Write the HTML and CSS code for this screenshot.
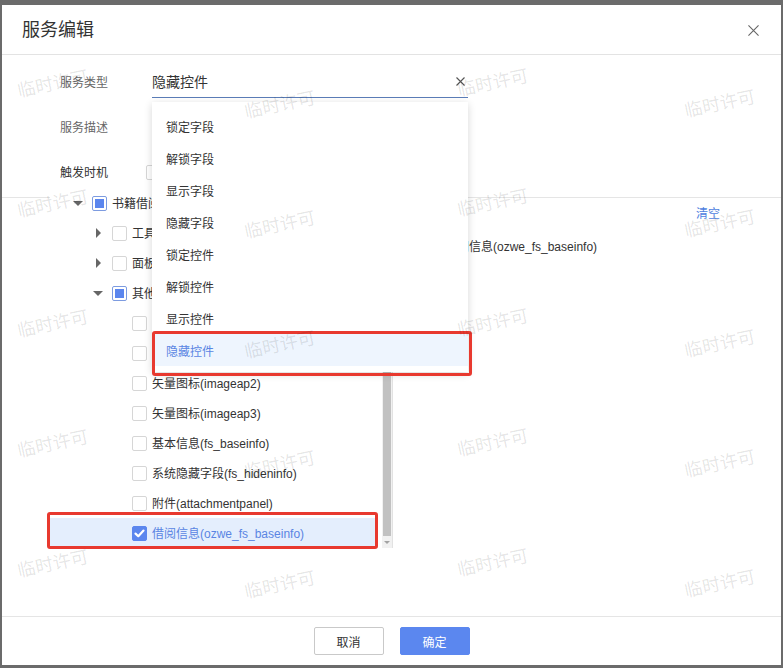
FILE: index.html
```html
<!DOCTYPE html>
<html lang="zh-CN">
<head>
<meta charset="utf-8">
<title>服务编辑</title>
<link rel="stylesheet" href="styles.css">
</head>
<body>
<div class="dialog">
  <div class="dlg-header">
    <span class="title">服务编辑</span>
    <svg class="close" viewBox="0 0 12 12"><path d="M0.5 0.5L11.5 11.5M11.5 0.5L0.5 11.5" stroke="#666" stroke-width="1.2" fill="none"/></svg>
  </div>
  <div class="dlg-body">
    <div class="form">
      <div class="form-row">
        <span class="lbl muted">服务类型</span>
        <div class="select">
          <span class="select-value">隐藏控件</span>
          <svg class="clear" viewBox="0 0 9 9"><path d="M0.5 0.5L8.5 8.5M8.5 0.5L0.5 8.5" stroke="#555" stroke-width="1.1" fill="none"/></svg>
          <ul class="dropdown">
            <li>锁定字段</li>
            <li>解锁字段</li>
            <li>显示字段</li>
            <li>隐藏字段</li>
            <li>锁定控件</li>
            <li>解锁控件</li>
            <li>显示控件</li>
            <li class="active">隐藏控件</li>
          </ul>
        </div>
      </div>
      <div class="form-row">
        <span class="lbl muted">服务描述</span>
      </div>
      <div class="form-row">
        <span class="lbl">触发时机</span>
        <span class="cb trigger-cb"></span>
      </div>
    </div>
    <div class="transfer">
      <div class="tree-panel">
        <div class="tree-rows">
          <div class="row"><span class="caret down"></span><span class="cb half"></span><span class="txt">书籍借阅信息</span></div>
          <div class="row l1"><span class="caret right"></span><span class="cb"></span><span class="txt">工具栏</span></div>
          <div class="row l1"><span class="caret right"></span><span class="cb"></span><span class="txt">面板</span></div>
          <div class="row l1"><span class="caret down"></span><span class="cb half"></span><span class="txt">其他</span></div>
          <div class="row l2"><span class="caret"></span><span class="cb"></span><span class="txt">矢量图标(imageap)</span></div>
          <div class="row l2"><span class="caret"></span><span class="cb"></span><span class="txt">矢量图标(imageap1)</span></div>
          <div class="row l2"><span class="caret"></span><span class="cb"></span><span class="txt">矢量图标(imageap2)</span></div>
          <div class="row l2"><span class="caret"></span><span class="cb"></span><span class="txt">矢量图标(imageap3)</span></div>
          <div class="row l2"><span class="caret"></span><span class="cb"></span><span class="txt">基本信息(fs_baseinfo)</span></div>
          <div class="row l2"><span class="caret"></span><span class="cb"></span><span class="txt">系统隐藏字段(fs_hideninfo)</span></div>
          <div class="row l2"><span class="caret"></span><span class="cb"></span><span class="txt">附件(attachmentpanel)</span></div>
          <div class="row l2 sel"><span class="caret"></span><span class="cb on"><svg viewBox="0 0 15 15" class="tick"><path d="M3.5 7.6L6.3 10.2L11.5 4.6" stroke="#fff" stroke-width="2.2" fill="none" stroke-linecap="round" stroke-linejoin="round"/></svg></span><span class="txt">借阅信息(ozwe_fs_baseinfo)</span></div>
        </div>
        <div class="scroll">
          <div class="scroll-gap"></div>
          <div class="thumb"></div>
          <div class="scroll-arrow"></div>
        </div>
      </div>
      <div class="selected">
        <div class="sel-head"><a class="link">清空</a></div>
        <div class="sel-item">借阅信息(ozwe_fs_baseinfo)</div>
      </div>
    </div>
  </div>
  <div class="dlg-footer">
    <button class="btn btn-default">取消</button>
    <button class="btn btn-primary">确定</button>
  </div>

  <div class="annot annot-1"></div>
  <div class="annot annot-2"></div>

  <div class="watermarks">
    <span class="wm" style="left:15px;top:69px">临时许可</span>
    <span class="wm" style="left:242px;top:90px">临时许可</span>
    <span class="wm" style="left:455px;top:68px">临时许可</span>
    <span class="wm" style="left:682px;top:89px">临时许可</span>
    <span class="wm" style="left:15px;top:189px">临时许可</span>
    <span class="wm" style="left:242px;top:210px">临时许可</span>
    <span class="wm" style="left:455px;top:188px">临时许可</span>
    <span class="wm" style="left:682px;top:209px">临时许可</span>
    <span class="wm" style="left:15px;top:309px">临时许可</span>
    <span class="wm" style="left:242px;top:330px">临时许可</span>
    <span class="wm" style="left:455px;top:308px">临时许可</span>
    <span class="wm" style="left:682px;top:329px">临时许可</span>
    <span class="wm" style="left:15px;top:429px">临时许可</span>
    <span class="wm" style="left:242px;top:450px">临时许可</span>
    <span class="wm" style="left:455px;top:428px">临时许可</span>
    <span class="wm" style="left:682px;top:449px">临时许可</span>
    <span class="wm" style="left:15px;top:549px">临时许可</span>
    <span class="wm" style="left:242px;top:570px">临时许可</span>
    <span class="wm" style="left:455px;top:548px">临时许可</span>
    <span class="wm" style="left:682px;top:569px">临时许可</span>
  </div>
</div>
</body>
</html>
```

FILE: styles.css
```css
* { box-sizing: border-box; }
html, body { margin: 0; padding: 0; }
body {
  background: #6b6b6b;
  width: 783px;
  height: 668px;
  overflow: hidden;
  font-family: "Liberation Sans", "Noto Sans CJK SC", sans-serif;
  font-size: 12px;
  color: #333;
}
.dialog {
  position: relative;
  margin: 5px 0 0 2px;
  width: 779px;
  height: 660px;
  background: #fff;
  display: flex;
  flex-direction: column;
}
.dlg-header {
  height: 50px;
  flex: none;
  border-bottom: 1px solid #e3e3e3;
  display: flex;
  align-items: center;
  justify-content: space-between;
  padding: 0 22px 0 20px;
}
.title { font-size: 18px; line-height: 24px; color: #333; }
.close { width: 11px; height: 11px; display: block; margin-top: 1px; }

.dlg-body { flex: 1; display: flex; flex-direction: column; }
.form { padding: 5px 0 2px 58px; }
.form-row { height: 45px; display: flex; align-items: center; }
.lbl { width: 92px; flex: none; line-height: 16px; color: #333; }
.muted { color: #666; }
.select {
  position: relative;
  width: 316px;
  height: 31px;
  border-bottom: 1px solid #5b7db8;
  display: flex;
  align-items: center;
  justify-content: space-between;
  padding-right: 3px;
}
.select-value { font-size: 14px; line-height: 30px; color: #333; }
.clear { width: 9px; height: 9px; display: block; margin-top: -2px; }
.dropdown {
  position: absolute;
  top: calc(100% + 5px);
  left: 0;
  width: 316px;
  margin: 0;
  padding: 8px 0 6px;
  list-style: none;
  background: #fff;
  box-shadow: 0 2px 8px rgba(0, 0, 0, 0.16);
  z-index: 5;
}
.dropdown li { height: 32px; line-height: 28px; padding: 4px 0 0 14px; color: #333; }
.dropdown li.active { background: #eef5fe; color: #5a85e3; }

.cb {
  width: 15px;
  height: 15px;
  flex: none;
  border: 1px solid #d6d6d6;
  border-radius: 2px;
  background: #fff;
  display: flex;
  align-items: center;
  justify-content: center;
  margin-right: 5px;
}
.trigger-cb { margin-left: -6px; }
.cb.half { border-color: #7d9be0; }
.cb.half::before { content: ""; width: 9px; height: 9px; background: #5b86ee; }
.cb.on { background: #5b86ee; border-color: #5b86ee; }
.tick { width: 15px; height: 15px; display: block; flex: none; }

.transfer {
  flex: 1;
  display: flex;
  align-items: flex-start;
  border-top: 1px solid #e5e5e5;
  padding-left: 48px;
}
.tree-panel {
  position: relative;
  z-index: 1;
  margin-top: -10px;
  width: 343px;
  height: 360px;
  flex: none;
  display: flex;
  background: #fff;
  border-right: 1px solid #e2e2e2;
}
.tree-rows { width: 332px; flex: none; }
.row {
  height: 30px;
  display: flex;
  align-items: center;
  padding-left: 20px;
  white-space: nowrap;
  overflow: hidden;
  line-height: 16px;
}
.row .txt { padding-top: 2px; }
.row.l1 { padding-left: 40px; }
.row.l2 { padding-left: 60px; }
.row.sel { background: #e4eefd; color: #5a85e3; width: 328px; }
.caret {
  width: 16px;
  height: 16px;
  flex: none;
  margin-right: 6px;
  display: flex;
  align-items: center;
  justify-content: center;
}
.caret.down::before {
  content: "";
  border-left: 5px solid transparent;
  border-right: 5px solid transparent;
  border-top: 5px solid #666;
}
.caret.right::before {
  content: "";
  border-top: 5px solid transparent;
  border-bottom: 5px solid transparent;
  border-left: 5px solid #666;
}
.scroll {
  width: 10px;
  height: 360px;
  flex: none;
  background: #f1f1f1;
  display: flex;
  flex-direction: column;
  align-items: center;
}
.scroll-gap { height: 12px; flex: none; }
.thumb { width: 8px; flex: 1; background: #c1c1c1; }
.scroll-arrow { height: 12px; flex: none; display: flex; align-items: center; justify-content: center; }
.scroll-arrow::before {
  content: "";
  border-left: 3px solid transparent;
  border-right: 3px solid transparent;
  border-top: 3px solid #a3a3a3;
}

.selected { flex: 1; padding-right: 61px; }
.sel-head { height: 32px; display: flex; justify-content: flex-end; align-items: center; }
.link { color: #4f7fe0; line-height: 16px; }
.sel-item { height: 32px; line-height: 32px; padding: 1px 0 0 52px; color: #333; }

.dlg-footer {
  height: 49px;
  flex: none;
  border-top: 1px solid #e5e5e5;
  display: flex;
  justify-content: center;
  align-items: center;
  gap: 16px;
}
.btn {
  width: 70px;
  height: 28px;
  border-radius: 2px;
  font-family: inherit;
  font-size: 12px;
  padding: 0;
}
.btn-default { background: #fff; border: 1px solid #c9c9c9; color: #333; }
.btn-primary { background: #5b87ef; border: 1px solid #5b87ef; color: #fff; }

.annot {
  position: absolute;
  border: 3px solid #e8392f;
  border-radius: 3px;
  z-index: 10;
  pointer-events: none;
}
.annot-1 { left: 150px; top: 326px; width: 320px; height: 45px; }
.annot-2 { left: 45px; top: 507px; width: 331px; height: 37px; }

.watermarks { position: absolute; inset: 0; z-index: 11; pointer-events: none; overflow: hidden; }
.wm {
  position: absolute;
  width: 72px;
  text-align: center;
  font-size: 18px;
  line-height: 20px;
  color: rgba(0, 0, 0, 0.11);
  transform: rotate(-12deg);
  white-space: nowrap;
}
```
